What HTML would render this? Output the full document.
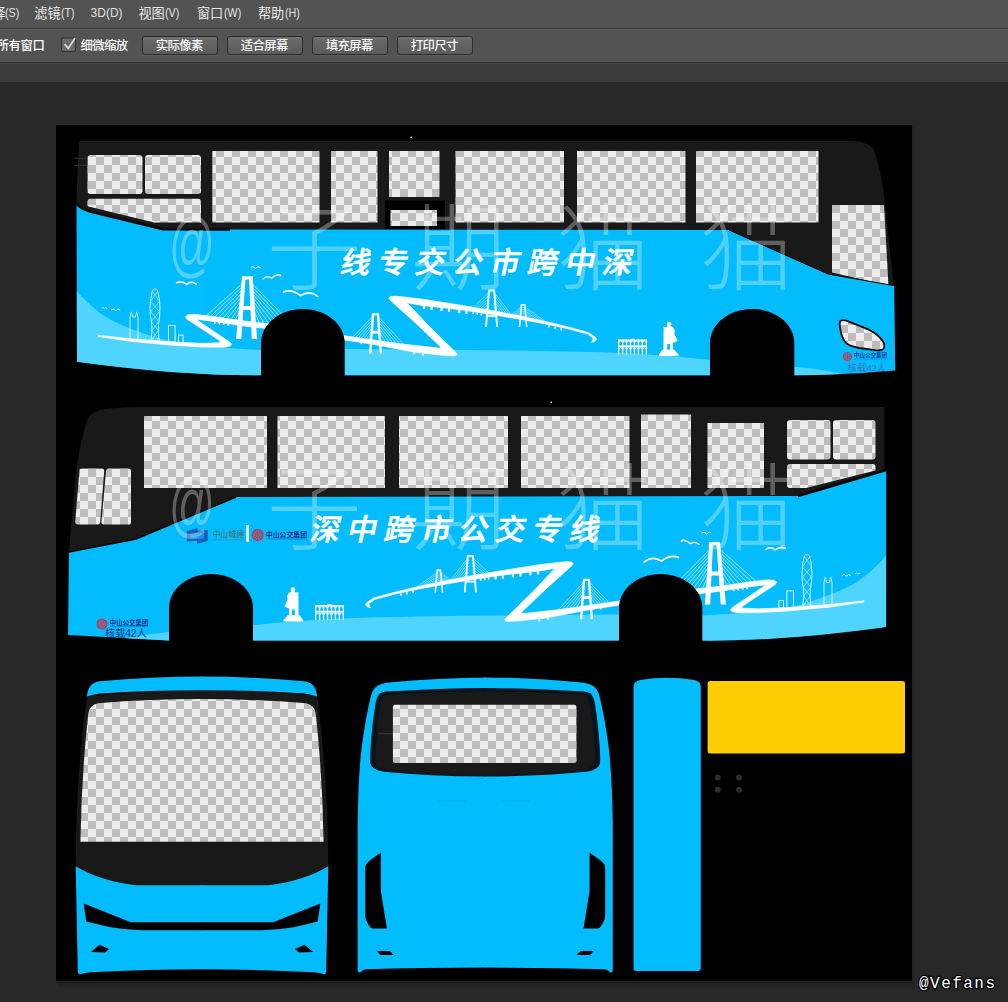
<!DOCTYPE html>
<html lang="zh"><head><meta charset="utf-8"><title>Photoshop - bus livery</title>
<style>
html,body{margin:0;padding:0;background:#282828;overflow:hidden}
body{width:1008px;height:1002px;position:relative;font-family:"Liberation Sans",sans-serif}
.mt{position:absolute;top:6.4px;color:#e2e2e2;font-size:12px;line-height:14px;white-space:nowrap;transform:scaleX(0.89);transform-origin:0 0}
svg text{font-family:"Liberation Sans","Noto Sans CJK SC",sans-serif}
</style></head><body>
<svg role="img" aria-label="Photoshop canvas: bus livery texture" width="1008" height="1002" viewBox="0 0 1008 1002" style="position:absolute;left:0;top:0"><defs>
<pattern id="ck" x="56" y="125" width="16" height="16" patternUnits="userSpaceOnUse"><rect width="16" height="16" fill="#ececec"/><rect x="8" width="8" height="8" fill="#bdbdbd"/><rect y="8" width="8" height="8" fill="#bdbdbd"/></pattern>
<linearGradient id="btn" x1="0" y1="0" x2="0" y2="1"><stop offset="0" stop-color="#6b6b6b"/><stop offset="1" stop-color="#5a5a5a"/></linearGradient>
<clipPath id="b2clip"><path d="M69,552 L136,539 L236,497 L798,496 L886,470 L886,627 Q782,641.3 702,640.5 L169,640.5 L68,635 Z"/></clipPath>
<clipPath id="docclip"><rect x="56" y="125" width="856" height="856"/></clipPath>
</defs>
<rect width="1008" height="1002" fill="#282828"/>
<rect width="1008" height="28" fill="#535353"/>
<rect y="28" width="1008" height="1" fill="#383838"/>
<rect y="29" width="1008" height="33" fill="#535353"/>
<rect y="29" width="1008" height="1" fill="#5e5e5e"/>
<rect y="62" width="1008" height="1" fill="#2e2e2e"/>
<rect y="63" width="1008" height="19" fill="#3b3b3b"/>
<rect y="63" width="1008" height="1" fill="#474747"/>
<defs><linearGradient id="shb" x1="0" y1="0" x2="0" y2="1"><stop offset="0" stop-color="#1d1d1d"/><stop offset="1" stop-color="#282828"/></linearGradient><linearGradient id="shr" x1="0" y1="0" x2="1" y2="0"><stop offset="0" stop-color="#212121"/><stop offset="1" stop-color="#282828"/></linearGradient></defs>
<rect x="57" y="981" width="857" height="8" fill="url(#shb)"/><rect x="912" y="127" width="4" height="856" fill="url(#shr)"/>
<rect x="56" y="125" width="856" height="856" fill="#000"/>
<path d="M79,141 L853,141 Q868,141.5 873.5,149 Q880,165 884,196 L894,287 L828,276 L729,232 L163,231 L76,207 Z" fill="#191919"/>
<rect x="87.5" y="155.0" width="55.0" height="39.0" rx="3.0" fill="url(#ck)"/>
<rect x="145.0" y="155.0" width="56.0" height="39.0" rx="3.0" fill="url(#ck)"/>
<path d="M90.5,198.8 L198,198.8 Q201,198.8 201,201.8 L201,222.6 L154,222.6 L87.5,206.2 L87.5,201.8 Q87.5,198.8 90.5,198.8Z" fill="url(#ck)"/>
<rect x="212.3" y="151.0" width="107.2" height="71.6" rx="0.5" fill="url(#ck)"/>
<rect x="331.0" y="151.0" width="46.5" height="71.6" rx="0.5" fill="url(#ck)"/>
<rect x="389.0" y="151.0" width="50.5" height="46.0" rx="0.5" fill="url(#ck)"/>
<rect x="385" y="200.5" width="60" height="29" fill="#000"/>
<rect x="390.5" y="210.0" width="46.5" height="16.0" rx="0.0" fill="url(#ck)"/>
<rect x="455.5" y="151.0" width="108.5" height="71.6" rx="0.5" fill="url(#ck)"/>
<rect x="577.0" y="151.0" width="108.5" height="71.6" rx="0.5" fill="url(#ck)"/>
<rect x="696.0" y="151.0" width="122.5" height="71.6" rx="0.5" fill="url(#ck)"/>
<path d="M832,205 L884,205 L888.5,285.5 L832,272.6 Z" fill="url(#ck)"/>
<path d="M76.5,203.6 Q80,208.5 90,211.6 L163,229.4 L729,230 L828,274 L894.2,285.8 L895.2,370.4 Q840,375 793,375.3 L260,375.3 Q180,375.8 77,361.8 Z" fill="#02bcfd" stroke="#000" stroke-width="0"/>
<path d="M76.5,203.6 Q80,208.5 90,211.6 L163,229.4 L230,229.6" fill="none" stroke="#050505" stroke-width="2.4"/>
<path d="M74,158.2 H87.5 M74,165.4 H87.5" stroke="#444" stroke-width="0.7"/>
<path d="M729,230 L828,274 L893,285.5" fill="none" stroke="#050505" stroke-width="1"/>
<clipPath id="b1clip"><path d="M76.5,203.6 Q80,208.5 90,211.6 L163,229.4 L729,230 L828,274 L894.2,285.8 L895.2,370.4 Q840,375 793,375.3 L260,375.3 Q180,375.8 77,361.8 Z"/></clipPath>
<g clip-path="url(#b1clip)"><g transform="translate(962,-265.5) scale(-1,1)"><path d="M100,662 L124,638 Q146,634.3 169,632 Q215,629 253,625.3 Q300,620 360,617.8 Q440,616 500,615.6 Q580,614.4 620,614.5 Q670,615.8 702,615.4 Q740,613.5 773,610 Q800,606 815,600 Q840,592 857,582 Q874,570 887,554.5 L890,650 Z" fill="#4fd4ff"/><g><g fill="#fff"><path d="M283.2,621.4 Q283,619.6 285,618.4 L287.6,615.2 L299.6,615.2 L301.8,618.4 Q303.6,619.6 303.3,621.4Z"/><circle cx="292.9" cy="589.6" r="2.3"/><path d="M291.6,591.2 L294.6,591.2 L295.2,592.4 L298.4,592.2 L298.6,615.4 L294.8,615.4 L294.8,609.4 L292,609.4 L292,615.4 L289,615.4 L289.2,608.4 L284.4,606.6 L287.6,599.6 L287.2,596 Q287.8,593 291.6,591.2Z"/></g><g fill="#fff"><rect x="315" y="605" width="29" height="1.3"/><rect x="315" y="610.9" width="29" height="1.5"/><rect x="327.5" y="604.2" width="4" height="1.2"/><rect x="315.00" y="605" width="1.3" height="14.9"/><rect x="318.96" y="605" width="1.3" height="14.9"/><rect x="322.91" y="605" width="1.3" height="14.9"/><rect x="326.87" y="605" width="1.3" height="14.9"/><rect x="330.83" y="605" width="1.3" height="14.9"/><rect x="334.79" y="605" width="1.3" height="14.9"/><rect x="338.74" y="605" width="1.3" height="14.9"/><rect x="342.70" y="605" width="1.3" height="14.9"/></g><g fill="none" stroke="#fff" stroke-width="0.8"><path d="M315.65,608.6 a1.98,2 0 0 1 3.96,0 M315.65,615.4 a1.98,2.2 0 0 1 3.96,0"/><path d="M319.61,608.6 a1.98,2 0 0 1 3.96,0 M319.61,615.4 a1.98,2.2 0 0 1 3.96,0"/><path d="M323.56,608.6 a1.98,2 0 0 1 3.96,0 M323.56,615.4 a1.98,2.2 0 0 1 3.96,0"/><path d="M327.52,608.6 a1.98,2 0 0 1 3.96,0 M327.52,615.4 a1.98,2.2 0 0 1 3.96,0"/><path d="M331.48,608.6 a1.98,2 0 0 1 3.96,0 M331.48,615.4 a1.98,2.2 0 0 1 3.96,0"/><path d="M335.44,608.6 a1.98,2 0 0 1 3.96,0 M335.44,615.4 a1.98,2.2 0 0 1 3.96,0"/><path d="M339.39,608.6 a1.98,2 0 0 1 3.96,0 M339.39,615.4 a1.98,2.2 0 0 1 3.96,0"/></g><path d="M366.3,603.0 L373.5,598.0 L394.7,592.2 L412.8,587.8 L436.4,582.6 L465.6,576.8 L499.0,571.0 L540.0,564.6 L566.0,561.6 L571.5,561.9 L573.3,563.6 L571.5,566.0 L546.0,589.0 L521.0,612.8 L523.0,613.6 L559.4,609.6 L590.0,605.2 L622.0,600.6 L622.0,604.8 L590.0,609.7 L545.5,618.0 L520.0,620.8 L507.0,621.6 L504.6,620.0 L506.5,617.5 L534.0,590.5 L553.0,570.3 L556.0,568.3 L540.0,570.9 L499.0,575.6 L465.6,580.8 L436.4,585.8 L412.8,590.2 L394.7,594.2 L374.5,599.6 L369.0,603.5 L369.5,606.5 L370.8,607.6 L368.0,607.3 L365.4,605.0Z" fill="#fff" stroke="#fff" stroke-width="0.6" stroke-linejoin="round"/><g fill="#fff"><rect x="494.5" y="575.8" width="2.2" height="3.6"/><rect x="501.7" y="575.0" width="2.2" height="3.6"/><rect x="511.9" y="573.7" width="2.2" height="3.6"/><rect x="519.4" y="572.9" width="2.2" height="3.6"/><rect x="529.2" y="571.7" width="2.2" height="3.6"/><rect x="536.9" y="570.8" width="2.2" height="3.6"/><rect x="538.5" y="618.9" width="1.6" height="2.6"/><rect x="547.0" y="617.2" width="1.6" height="2.6"/><rect x="600.0" y="607" width="1.4" height="2.6"/><rect x="400.0" y="593.4" width="1.5" height="2.6"/><rect x="406.0" y="592.0" width="1.5" height="2.6"/><rect x="412.5" y="590.5" width="1.5" height="2.6"/><rect x="480.0" y="578.6" width="1.4" height="2.4"/><rect x="484.0" y="577.9" width="1.4" height="2.4"/><rect x="488.0" y="577.2" width="1.4" height="2.4"/></g><g stroke="#fff" stroke-width="0.50" opacity="0.85" fill="none"><path d="M438.9,571.0 L413.5,589.3"/><path d="M438.9,572.8 L417.1,588.6"/><path d="M438.9,574.7 L420.7,587.9"/><path d="M438.9,576.5 L424.2,587.2"/><path d="M438.9,578.3 L427.8,586.6"/><path d="M438.9,580.2 L431.4,585.9"/><path d="M438.9,582.0 L435.0,585.2"/></g><g stroke="#fff" stroke-width="0.50" opacity="0.80" fill="none"><path d="M438.9,571.0 L451.0,580.4"/><path d="M438.9,572.8 L449.7,580.8"/><path d="M438.9,574.7 L448.3,581.1"/><path d="M438.9,576.5 L447.0,581.5"/><path d="M438.9,578.3 L445.7,581.9"/><path d="M438.9,580.2 L444.3,582.2"/><path d="M438.9,582.0 L443.0,582.6"/></g><g stroke="#fff" stroke-width="0.50" opacity="0.85" fill="none"><path d="M468.6,557.0 L450.0,581.0"/><path d="M468.6,560.0 L452.5,580.6"/><path d="M468.6,563.0 L455.0,580.1"/><path d="M468.6,566.0 L457.5,579.7"/><path d="M468.6,569.0 L460.0,579.3"/><path d="M468.6,572.0 L462.5,578.8"/><path d="M468.6,575.0 L465.0,578.4"/></g><g stroke="#fff" stroke-width="0.50" opacity="0.85" fill="none"><path d="M472.2,557.0 L489.0,573.2"/><path d="M472.2,560.0 L486.8,573.7"/><path d="M472.2,563.0 L484.7,574.1"/><path d="M472.2,566.0 L482.5,574.6"/><path d="M472.2,569.0 L480.3,575.1"/><path d="M472.2,572.0 L478.2,575.5"/><path d="M472.2,575.0 L476.0,576.0"/></g><path d="M437.3,569.5 L435.3,592.5 M440.5,569.5 L442.5,592.5" stroke="#fff" stroke-width="1.5" fill="none"/><path d="M437.2,570.2 L440.6,570.2" stroke="#fff" stroke-width="1.5"/><path d="M467.9,555.2 L464.8,592.3 M472.9,555.2 L476.0,592.3" stroke="#fff" stroke-width="1.9" fill="none"/><path d="M467.8,556.0 L473.0,556.0" stroke="#fff" stroke-width="1.9"/><path d="M465.7,581.6 L475.1,581.6" stroke="#fff" stroke-width="1.9"/><g stroke="#fff" stroke-width="0.55" opacity="0.90" fill="none"><path d="M584.6,581.0 L558.0,610.3"/><path d="M584.6,583.7 L561.7,609.8"/><path d="M584.6,586.3 L565.3,609.3"/><path d="M584.6,589.0 L569.0,608.8"/><path d="M584.6,591.7 L572.7,608.2"/><path d="M584.6,594.3 L576.3,607.7"/><path d="M584.6,597.0 L580.0,607.2"/></g><g stroke="#fff" stroke-width="0.55" opacity="0.90" fill="none"><path d="M588.4,581.0 L609.0,602.4"/><path d="M588.4,583.7 L606.3,602.8"/><path d="M588.4,586.3 L603.7,603.3"/><path d="M588.4,589.0 L601.0,603.7"/><path d="M588.4,591.7 L598.3,604.1"/><path d="M588.4,594.3 L595.7,604.6"/><path d="M588.4,597.0 L593.0,605.0"/></g><path d="M584.1,578.8 L581.1,619.2 M588.9,578.8 L591.9,619.2" stroke="#fff" stroke-width="2.3" fill="none"/><path d="M584.0,579.8 L589.0,579.8" stroke="#fff" stroke-width="2.3"/><path d="M582.7,597.6 L590.3,597.6" stroke="#fff" stroke-width="2.3"/><rect x="583.6" y="596.2" width="5.8" height="2.8" fill="#fff"/><path d="M690.0,589.6 L711.0,587.3 L731.7,584.6 L752.5,581.4 L767.8,579.8 L774.0,580.3 L776.6,582.0 L775.2,584.6 L757.0,596.5 L742.5,606.2 L741.5,607.6 L744.0,608.2 L759.4,608.8 L787.0,607.6 L829.0,604.4 L864.0,600.8 L864.0,602.0 L829.0,607.2 L787.0,611.0 L759.4,612.6 L738.0,612.8 L731.6,611.6 L730.4,609.6 L733.0,607.0 L748.0,597.0 L766.0,584.8 L752.5,586.4 L731.7,589.6 L711.0,592.4 L690.0,594.6Z" fill="#fff" stroke="#fff" stroke-width="0.6" stroke-linejoin="round"/><g fill="#fff"><rect x="733.0" y="589.0" width="1.4" height="2.2"/><rect x="737.5" y="588.3" width="1.4" height="2.2"/><rect x="742.0" y="587.6" width="1.4" height="2.2"/><rect x="746.5" y="587.0" width="1.4" height="2.2"/></g><g stroke="#fff" stroke-width="0.65" opacity="0.90" fill="none"><path d="M711.2,548.0 L660.0,600.0"/><path d="M711.2,551.0 L665.8,599.1"/><path d="M711.2,554.0 L671.5,598.2"/><path d="M711.2,557.0 L677.2,597.3"/><path d="M711.2,560.0 L683.0,596.4"/><path d="M711.2,563.0 L688.8,595.5"/><path d="M711.2,566.0 L694.5,594.6"/><path d="M711.2,569.0 L700.2,593.7"/><path d="M711.2,572.0 L706.0,592.8"/></g><g stroke="#fff" stroke-width="0.65" opacity="0.90" fill="none"><path d="M718.4,548.0 L755.5,580.8"/><path d="M718.4,551.0 L751.6,581.8"/><path d="M718.4,554.0 L747.6,582.7"/><path d="M718.4,557.0 L743.7,583.6"/><path d="M718.4,560.0 L739.8,584.6"/><path d="M718.4,563.0 L735.8,585.5"/><path d="M718.4,566.0 L731.9,586.5"/><path d="M718.4,569.0 L727.9,587.4"/><path d="M718.4,572.0 L724.0,588.4"/></g><g fill="#fff"><path d="M709.3,542 L720,542 L720,545 L709.3,545Z"/><path d="M709.3,542 L713,542 L710.2,604.4 L704.9,604.4Z"/><path d="M716.4,542 L720,542 L725.9,604.4 L720.7,604.4Z"/><path d="M710.5,571.6 L719.5,571.6 L719.8,575.4 L710.2,575.4Z"/></g><g fill="none" stroke="#fff" stroke-width="0.9"><rect x="778.9" y="600.6" width="4.6" height="7.6"/><rect x="786.9" y="590.9" width="6.6" height="16.8"/><path d="M824,604.8 L824,582.5 L825.3,577.4 L826.6,582.5 L829.4,582.5 L830.7,577.4 L832,582.5 L832,604" opacity="0.85"/><path d="M804.4,556 Q800,572 803.6,590 Q804,598 802.7,606.6 M809.6,556 Q814,572 810.2,590 Q809.8,598 811,606.6 M804.4,556 Q807,552.6 809.6,556" stroke-width="0.8"/><path d="M804.6,557 L811.6,567 L802.6,577 L810.8,587 L803.6,596 L810.8,606 M809.4,557 L802.4,567 L811.4,577 L803.2,587 L810.2,596 L803,606" stroke-width="0.55" opacity="0.9"/></g><ellipse cx="807" cy="555.2" rx="2.4" ry="1.2" fill="#8aa" opacity="0.8"/><path d="M644.3,561.9 Q652.6,555.1 661.4,561.1 Q670.2,554.1 678.5,557.5" fill="none" stroke="#fff" stroke-width="1.7" stroke-linecap="round" stroke-linejoin="round"/><path d="M681.2,541.3 Q683.8,538.3 690.4,543.7 Q694.7,540.8 699.1,544.4" fill="none" stroke="#fff" stroke-width="1.3" stroke-linecap="round" stroke-linejoin="round"/><path d="M701.9,532.9 Q703.8,531.0 706.6,533.9 Q709.2,531.2 711.0,532.5" fill="none" stroke="#fff" stroke-width="1.0" stroke-linecap="round" stroke-linejoin="round"/><path d="M765.7,549.6 Q770.5,545.8 775.4,550.0 Q780.1,545.9 785.5,548.2" fill="none" stroke="#fff" stroke-width="1.5" stroke-linecap="round" stroke-linejoin="round"/><path d="M842.0,575.5 Q843.9,573.0 846.2,576.0 Q848.6,573.6 850.5,575.2" fill="none" stroke="#fff" stroke-width="0.9" stroke-linecap="round" stroke-linejoin="round"/><path d="M855.3,573.6 Q856.5,572.2 857.7,574.0 Q859.0,572.4 860.2,573.3" fill="none" stroke="#fff" stroke-width="0.7" stroke-linecap="round" stroke-linejoin="round"/></g></g></g>
<path d="M261.0,380.0 L261.0,343.0 C261.0,324.2 279.7,309.0 302.9,309.0 C326.0,309.0 344.7,324.2 344.7,343.0 L344.7,380.0 Z" fill="#000"/>
<path d="M710.0,380.0 L710.0,343.0 C710.0,324.2 728.9,309.0 752.1,309.0 C775.4,309.0 794.3,324.2 794.3,343.0 L794.3,380.0 Z" fill="#000"/>
<text transform="translate(339.20,273.40) skewX(-12)" x="0 37.45 74.9 112.35 149.8 187.25 224.7 262.15" y="0" font-size="29.5" font-weight="500" fill="#fff" stroke="#fff" stroke-width="0.65">线专交公市跨中深</text>
<path d="M840.6,320.8 Q843,319.6 847,320.9 L864.6,327.9 Q873,331.5 877.5,335.2 Q882.5,339.5 884,343.5 Q885,348.3 882.5,349.6 Q879,350.8 875,350.2 L859.3,348 Q851,346.5 846.8,343.8 Q843,340 841.9,335.7 Q840,329 839.7,325 Q839.5,321.5 840.6,320.8Z" fill="url(#ck)" stroke="#0a0a0a" stroke-width="1.8"/>
<g fill="none" stroke="#c9344c" stroke-width="0.94"><circle cx="847.50" cy="356.70" r="4.23"/><path d="M847.50,352.47 L847.50,360.93 M843.27,356.70 L851.73,356.70"/><circle cx="845.38" cy="354.73" r="0.94"/><circle cx="845.38" cy="358.67" r="0.94"/><circle cx="849.62" cy="354.73" r="0.94"/><circle cx="849.62" cy="358.67" r="0.94"/></g>
<text x="854.1 859.62 865.13 870.65 876.17 881.68" y="357.18" font-size="5.4" font-weight="700" fill="#1a3a98">中山公交集团</text>
<rect x="854.3" y="358.6" width="32.5" height="0.8" fill="#1a3a98" opacity="0.35"/>
<text x="847.5 856.94 866.38 871.62 876.86" y="370.58" font-size="9.6" fill="#3f74b9">核载42人</text>
<path d="M150,407 L884.5,407 L884.5,476 L798,498 L236,499 L136,541 L68.5,554 L76.3,472 Q80,442 87,421 Q89.5,413 100,410 Q112,407.3 150,407Z" fill="#191919"/>
<path d="M79.6,469 Q80,468.6 82,468.6 L102,468.6 Q104.4,468.8 104.2,471 L100.2,522 Q100,524.6 97.5,524.6 L77.5,524.6 Q75,524.4 75.2,522 Z" fill="url(#ck)"/>
<path d="M106,471 Q106.2,468.7 108.5,468.6 L128.5,468.6 Q131,468.8 131,471 L131,522 Q131,524.6 128.5,524.6 L103.5,524.6 Q101.2,524.4 101.4,522 Z" fill="url(#ck)"/>
<rect x="144.0" y="416.0" width="123.0" height="72.0" rx="0.5" fill="url(#ck)"/>
<rect x="277.5" y="416.0" width="107.5" height="72.0" rx="0.5" fill="url(#ck)"/>
<rect x="399.0" y="416.0" width="109.0" height="72.0" rx="0.5" fill="url(#ck)"/>
<rect x="521.0" y="416.0" width="108.5" height="72.0" rx="0.5" fill="url(#ck)"/>
<rect x="641.0" y="414.5" width="50.0" height="73.5" rx="0.5" fill="url(#ck)"/>
<rect x="707.5" y="423.0" width="56.5" height="65.0" rx="0.5" fill="url(#ck)"/>
<rect x="787.0" y="420.0" width="43.5" height="39.5" rx="3.0" fill="url(#ck)"/>
<rect x="833.0" y="420.0" width="42.5" height="39.5" rx="3.0" fill="url(#ck)"/>
<path d="M790,464 L872.5,464 Q875.5,464 875.5,467 L875.5,470.5 L806,488 L790,488 Q787,488 787,485 L787,467 Q787,464 790,464Z" fill="url(#ck)"/>
<path d="M69,552 L136,539 L236,497 L798,496 L886.2,470 L886.2,627 Q782,641.3 702,640.6 L169,640.6 L68,635 Z" fill="#02bcfd"/>
<path d="M69,552 L136,539 L236,497" fill="none" stroke="#050505" stroke-width="1.6"/>
<path d="M798,496 L886.2,470" fill="none" stroke="#050505" stroke-width="2.4"/>
<g clip-path="url(#b2clip)"><path d="M100,662 L124,638 Q146,634.3 169,632 Q215,629 253,625.3 Q300,620 360,617.8 Q440,616 500,615.6 Q580,614.4 620,614.5 Q670,615.8 702,615.4 Q740,613.5 773,610 Q800,606 815,600 Q840,592 857,582 Q874,570 887,554.5 L890,650 Z" fill="#4fd4ff"/><g><g fill="#fff"><path d="M283.2,621.4 Q283,619.6 285,618.4 L287.6,615.2 L299.6,615.2 L301.8,618.4 Q303.6,619.6 303.3,621.4Z"/><circle cx="292.9" cy="589.6" r="2.3"/><path d="M291.6,591.2 L294.6,591.2 L295.2,592.4 L298.4,592.2 L298.6,615.4 L294.8,615.4 L294.8,609.4 L292,609.4 L292,615.4 L289,615.4 L289.2,608.4 L284.4,606.6 L287.6,599.6 L287.2,596 Q287.8,593 291.6,591.2Z"/></g><g fill="#fff"><rect x="315" y="605" width="29" height="1.3"/><rect x="315" y="610.9" width="29" height="1.5"/><rect x="327.5" y="604.2" width="4" height="1.2"/><rect x="315.00" y="605" width="1.3" height="14.9"/><rect x="318.96" y="605" width="1.3" height="14.9"/><rect x="322.91" y="605" width="1.3" height="14.9"/><rect x="326.87" y="605" width="1.3" height="14.9"/><rect x="330.83" y="605" width="1.3" height="14.9"/><rect x="334.79" y="605" width="1.3" height="14.9"/><rect x="338.74" y="605" width="1.3" height="14.9"/><rect x="342.70" y="605" width="1.3" height="14.9"/></g><g fill="none" stroke="#fff" stroke-width="0.8"><path d="M315.65,608.6 a1.98,2 0 0 1 3.96,0 M315.65,615.4 a1.98,2.2 0 0 1 3.96,0"/><path d="M319.61,608.6 a1.98,2 0 0 1 3.96,0 M319.61,615.4 a1.98,2.2 0 0 1 3.96,0"/><path d="M323.56,608.6 a1.98,2 0 0 1 3.96,0 M323.56,615.4 a1.98,2.2 0 0 1 3.96,0"/><path d="M327.52,608.6 a1.98,2 0 0 1 3.96,0 M327.52,615.4 a1.98,2.2 0 0 1 3.96,0"/><path d="M331.48,608.6 a1.98,2 0 0 1 3.96,0 M331.48,615.4 a1.98,2.2 0 0 1 3.96,0"/><path d="M335.44,608.6 a1.98,2 0 0 1 3.96,0 M335.44,615.4 a1.98,2.2 0 0 1 3.96,0"/><path d="M339.39,608.6 a1.98,2 0 0 1 3.96,0 M339.39,615.4 a1.98,2.2 0 0 1 3.96,0"/></g><path d="M366.3,603.0 L373.5,598.0 L394.7,592.2 L412.8,587.8 L436.4,582.6 L465.6,576.8 L499.0,571.0 L540.0,564.6 L566.0,561.6 L571.5,561.9 L573.3,563.6 L571.5,566.0 L546.0,589.0 L521.0,612.8 L523.0,613.6 L559.4,609.6 L590.0,605.2 L622.0,600.6 L622.0,604.8 L590.0,609.7 L545.5,618.0 L520.0,620.8 L507.0,621.6 L504.6,620.0 L506.5,617.5 L534.0,590.5 L553.0,570.3 L556.0,568.3 L540.0,570.9 L499.0,575.6 L465.6,580.8 L436.4,585.8 L412.8,590.2 L394.7,594.2 L374.5,599.6 L369.0,603.5 L369.5,606.5 L370.8,607.6 L368.0,607.3 L365.4,605.0Z" fill="#fff" stroke="#fff" stroke-width="0.6" stroke-linejoin="round"/><g fill="#fff"><rect x="494.5" y="575.8" width="2.2" height="3.6"/><rect x="501.7" y="575.0" width="2.2" height="3.6"/><rect x="511.9" y="573.7" width="2.2" height="3.6"/><rect x="519.4" y="572.9" width="2.2" height="3.6"/><rect x="529.2" y="571.7" width="2.2" height="3.6"/><rect x="536.9" y="570.8" width="2.2" height="3.6"/><rect x="538.5" y="618.9" width="1.6" height="2.6"/><rect x="547.0" y="617.2" width="1.6" height="2.6"/><rect x="600.0" y="607" width="1.4" height="2.6"/><rect x="400.0" y="593.4" width="1.5" height="2.6"/><rect x="406.0" y="592.0" width="1.5" height="2.6"/><rect x="412.5" y="590.5" width="1.5" height="2.6"/><rect x="480.0" y="578.6" width="1.4" height="2.4"/><rect x="484.0" y="577.9" width="1.4" height="2.4"/><rect x="488.0" y="577.2" width="1.4" height="2.4"/></g><g stroke="#fff" stroke-width="0.50" opacity="0.85" fill="none"><path d="M438.9,571.0 L413.5,589.3"/><path d="M438.9,572.8 L417.1,588.6"/><path d="M438.9,574.7 L420.7,587.9"/><path d="M438.9,576.5 L424.2,587.2"/><path d="M438.9,578.3 L427.8,586.6"/><path d="M438.9,580.2 L431.4,585.9"/><path d="M438.9,582.0 L435.0,585.2"/></g><g stroke="#fff" stroke-width="0.50" opacity="0.80" fill="none"><path d="M438.9,571.0 L451.0,580.4"/><path d="M438.9,572.8 L449.7,580.8"/><path d="M438.9,574.7 L448.3,581.1"/><path d="M438.9,576.5 L447.0,581.5"/><path d="M438.9,578.3 L445.7,581.9"/><path d="M438.9,580.2 L444.3,582.2"/><path d="M438.9,582.0 L443.0,582.6"/></g><g stroke="#fff" stroke-width="0.50" opacity="0.85" fill="none"><path d="M468.6,557.0 L450.0,581.0"/><path d="M468.6,560.0 L452.5,580.6"/><path d="M468.6,563.0 L455.0,580.1"/><path d="M468.6,566.0 L457.5,579.7"/><path d="M468.6,569.0 L460.0,579.3"/><path d="M468.6,572.0 L462.5,578.8"/><path d="M468.6,575.0 L465.0,578.4"/></g><g stroke="#fff" stroke-width="0.50" opacity="0.85" fill="none"><path d="M472.2,557.0 L489.0,573.2"/><path d="M472.2,560.0 L486.8,573.7"/><path d="M472.2,563.0 L484.7,574.1"/><path d="M472.2,566.0 L482.5,574.6"/><path d="M472.2,569.0 L480.3,575.1"/><path d="M472.2,572.0 L478.2,575.5"/><path d="M472.2,575.0 L476.0,576.0"/></g><path d="M437.3,569.5 L435.3,592.5 M440.5,569.5 L442.5,592.5" stroke="#fff" stroke-width="1.5" fill="none"/><path d="M437.2,570.2 L440.6,570.2" stroke="#fff" stroke-width="1.5"/><path d="M467.9,555.2 L464.8,592.3 M472.9,555.2 L476.0,592.3" stroke="#fff" stroke-width="1.9" fill="none"/><path d="M467.8,556.0 L473.0,556.0" stroke="#fff" stroke-width="1.9"/><path d="M465.7,581.6 L475.1,581.6" stroke="#fff" stroke-width="1.9"/><g stroke="#fff" stroke-width="0.55" opacity="0.90" fill="none"><path d="M584.6,581.0 L558.0,610.3"/><path d="M584.6,583.7 L561.7,609.8"/><path d="M584.6,586.3 L565.3,609.3"/><path d="M584.6,589.0 L569.0,608.8"/><path d="M584.6,591.7 L572.7,608.2"/><path d="M584.6,594.3 L576.3,607.7"/><path d="M584.6,597.0 L580.0,607.2"/></g><g stroke="#fff" stroke-width="0.55" opacity="0.90" fill="none"><path d="M588.4,581.0 L609.0,602.4"/><path d="M588.4,583.7 L606.3,602.8"/><path d="M588.4,586.3 L603.7,603.3"/><path d="M588.4,589.0 L601.0,603.7"/><path d="M588.4,591.7 L598.3,604.1"/><path d="M588.4,594.3 L595.7,604.6"/><path d="M588.4,597.0 L593.0,605.0"/></g><path d="M584.1,578.8 L581.1,619.2 M588.9,578.8 L591.9,619.2" stroke="#fff" stroke-width="2.3" fill="none"/><path d="M584.0,579.8 L589.0,579.8" stroke="#fff" stroke-width="2.3"/><path d="M582.7,597.6 L590.3,597.6" stroke="#fff" stroke-width="2.3"/><rect x="583.6" y="596.2" width="5.8" height="2.8" fill="#fff"/><path d="M690.0,589.6 L711.0,587.3 L731.7,584.6 L752.5,581.4 L767.8,579.8 L774.0,580.3 L776.6,582.0 L775.2,584.6 L757.0,596.5 L742.5,606.2 L741.5,607.6 L744.0,608.2 L759.4,608.8 L787.0,607.6 L829.0,604.4 L864.0,600.8 L864.0,602.0 L829.0,607.2 L787.0,611.0 L759.4,612.6 L738.0,612.8 L731.6,611.6 L730.4,609.6 L733.0,607.0 L748.0,597.0 L766.0,584.8 L752.5,586.4 L731.7,589.6 L711.0,592.4 L690.0,594.6Z" fill="#fff" stroke="#fff" stroke-width="0.6" stroke-linejoin="round"/><g fill="#fff"><rect x="733.0" y="589.0" width="1.4" height="2.2"/><rect x="737.5" y="588.3" width="1.4" height="2.2"/><rect x="742.0" y="587.6" width="1.4" height="2.2"/><rect x="746.5" y="587.0" width="1.4" height="2.2"/></g><g stroke="#fff" stroke-width="0.65" opacity="0.90" fill="none"><path d="M711.2,548.0 L660.0,600.0"/><path d="M711.2,551.0 L665.8,599.1"/><path d="M711.2,554.0 L671.5,598.2"/><path d="M711.2,557.0 L677.2,597.3"/><path d="M711.2,560.0 L683.0,596.4"/><path d="M711.2,563.0 L688.8,595.5"/><path d="M711.2,566.0 L694.5,594.6"/><path d="M711.2,569.0 L700.2,593.7"/><path d="M711.2,572.0 L706.0,592.8"/></g><g stroke="#fff" stroke-width="0.65" opacity="0.90" fill="none"><path d="M718.4,548.0 L755.5,580.8"/><path d="M718.4,551.0 L751.6,581.8"/><path d="M718.4,554.0 L747.6,582.7"/><path d="M718.4,557.0 L743.7,583.6"/><path d="M718.4,560.0 L739.8,584.6"/><path d="M718.4,563.0 L735.8,585.5"/><path d="M718.4,566.0 L731.9,586.5"/><path d="M718.4,569.0 L727.9,587.4"/><path d="M718.4,572.0 L724.0,588.4"/></g><g fill="#fff"><path d="M709.3,542 L720,542 L720,545 L709.3,545Z"/><path d="M709.3,542 L713,542 L710.2,604.4 L704.9,604.4Z"/><path d="M716.4,542 L720,542 L725.9,604.4 L720.7,604.4Z"/><path d="M710.5,571.6 L719.5,571.6 L719.8,575.4 L710.2,575.4Z"/></g><g fill="none" stroke="#fff" stroke-width="0.9"><rect x="778.9" y="600.6" width="4.6" height="7.6"/><rect x="786.9" y="590.9" width="6.6" height="16.8"/><path d="M824,604.8 L824,582.5 L825.3,577.4 L826.6,582.5 L829.4,582.5 L830.7,577.4 L832,582.5 L832,604" opacity="0.85"/><path d="M804.4,556 Q800,572 803.6,590 Q804,598 802.7,606.6 M809.6,556 Q814,572 810.2,590 Q809.8,598 811,606.6 M804.4,556 Q807,552.6 809.6,556" stroke-width="0.8"/><path d="M804.6,557 L811.6,567 L802.6,577 L810.8,587 L803.6,596 L810.8,606 M809.4,557 L802.4,567 L811.4,577 L803.2,587 L810.2,596 L803,606" stroke-width="0.55" opacity="0.9"/></g><ellipse cx="807" cy="555.2" rx="2.4" ry="1.2" fill="#8aa" opacity="0.8"/><path d="M644.3,561.9 Q652.6,555.1 661.4,561.1 Q670.2,554.1 678.5,557.5" fill="none" stroke="#fff" stroke-width="1.7" stroke-linecap="round" stroke-linejoin="round"/><path d="M681.2,541.3 Q683.8,538.3 690.4,543.7 Q694.7,540.8 699.1,544.4" fill="none" stroke="#fff" stroke-width="1.3" stroke-linecap="round" stroke-linejoin="round"/><path d="M701.9,532.9 Q703.8,531.0 706.6,533.9 Q709.2,531.2 711.0,532.5" fill="none" stroke="#fff" stroke-width="1.0" stroke-linecap="round" stroke-linejoin="round"/><path d="M765.7,549.6 Q770.5,545.8 775.4,550.0 Q780.1,545.9 785.5,548.2" fill="none" stroke="#fff" stroke-width="1.5" stroke-linecap="round" stroke-linejoin="round"/><path d="M842.0,575.5 Q843.9,573.0 846.2,576.0 Q848.6,573.6 850.5,575.2" fill="none" stroke="#fff" stroke-width="0.9" stroke-linecap="round" stroke-linejoin="round"/><path d="M855.3,573.6 Q856.5,572.2 857.7,574.0 Q859.0,572.4 860.2,573.3" fill="none" stroke="#fff" stroke-width="0.7" stroke-linecap="round" stroke-linejoin="round"/></g></g>
<path d="M169.0,646.0 L169.0,608.0 C169.0,589.2 187.8,574.0 211.0,574.0 C234.2,574.0 253.0,589.2 253.0,608.0 L253.0,646.0 Z" fill="#000"/>
<path d="M619.0,646.0 L619.0,608.0 C619.0,589.2 637.6,574.0 660.6,574.0 C683.7,574.0 702.3,589.2 702.3,608.0 L702.3,646.0 Z" fill="#000"/>
<text transform="translate(309.00,540.00) skewX(-12)" x="0 37.05 74.1 111.15 148.2 185.25 222.3 259.35" y="0" font-size="29.5" font-weight="500" fill="#fff" stroke="#fff" stroke-width="0.65">深中跨市公交专线</text>
<path fill-rule="evenodd" fill="#1d5fb6" d="M186.8,531 L197.6,528 L197.6,530.8 L207.8,530 L207.8,541 L197,543.7 L197,540.8 L186.8,541.6 Z M190.5,533.6 L204,532.8 L204,538.4 L190.5,539.2 Z"/>
<path fill="#1488e4" opacity="0.75" d="M190.5,533.6 L204,532.8 L204,538.4 L190.5,539.2 Z"/>
<text x="212.4 220.35 228.3 236.25" y="537.37" font-size="8" fill="#4f6b66">中山城建</text>
<rect x="212.8" y="539.3" width="31" height="0.9" fill="#4b6f78" opacity="0.3"/>
<rect x="246.3" y="525" width="2.6" height="16.8" fill="#fff"/>
<g fill="none" stroke="#c9344c" stroke-width="1.20"><circle cx="257.80" cy="535.00" r="5.40"/><path d="M257.80,529.60 L257.80,540.40 M252.40,535.00 L263.20,535.00"/><circle cx="255.10" cy="532.48" r="1.20"/><circle cx="255.10" cy="537.52" r="1.20"/><circle cx="260.50" cy="532.48" r="1.20"/><circle cx="260.50" cy="537.52" r="1.20"/></g>
<text x="265.8 272.67 279.53 286.4 293.27 300.13" y="536.76" font-size="6.9" font-weight="700" fill="#17328c">中山公交集团</text>
<rect x="266.2" y="538.3" width="40" height="1.1" fill="#17328c" opacity="0.35"/>
<g fill="none" stroke="#c9344c" stroke-width="1.12"><circle cx="102.00" cy="624.00" r="5.04"/><path d="M102.00,618.96 L102.00,629.04 M96.96,624.00 L107.04,624.00"/><circle cx="99.48" cy="621.65" r="1.12"/><circle cx="99.48" cy="626.35" r="1.12"/><circle cx="104.52" cy="621.65" r="1.12"/><circle cx="104.52" cy="626.35" r="1.12"/></g>
<text x="109.8 116.22 122.63 129.05 135.47 141.88" y="624.52" font-size="6.4" font-weight="700" fill="#17328c">中山公交集团</text>
<rect x="110" y="626" width="38" height="0.9" fill="#17328c" opacity="0.35"/>
<text x="105 115.1 125.19 130.8 136.4" y="636.86" font-size="10.3" fill="#1b3a7c">核载42人</text>
<g><path d="M202.6,690.2 Q150,690.2 86.9,696.3 Q76,775 75.7,867 L76,876 L136,887 L202.6,887Z" fill="#191919"/><g transform="translate(404.00,0) scale(-1,1)"><path d="M202.6,690.2 Q150,690.2 86.9,696.3 Q76,775 75.7,867 L76,876 L136,887 L202.6,887Z" fill="#191919"/></g></g>
<g><path d="M202.6,676.6 Q150,676.7 100,681.3 Q93,682 90,686.5 Q87.5,690 86.9,696.6 Q93,694.2 100,693.4 Q150,690.2 202.6,690.2Z" fill="#02bcfd"/><g transform="translate(404.00,0) scale(-1,1)"><path d="M202.6,676.6 Q150,676.7 100,681.3 Q93,682 90,686.5 Q87.5,690 86.9,696.6 Q93,694.2 100,693.4 Q150,690.2 202.6,690.2Z" fill="#02bcfd"/></g></g>
<path d="M202,699 Q150,699 98,703.2 Q94,704 91.3,706.7 Q89,708.5 88.3,713 Q81.5,775 80.4,841.8 L323.6,841.8 Q322.5,775 315.7,713 Q315,708.5 312.7,706.7 Q310,704 306,703.2 Q254,699 202,699Z" fill="url(#ck)"/>
<g><path d="M202.6,885.3 L136,885.3 Q100,881 75.7,866.3 L77.8,972 Q78.2,975 81,974 Q84,972.6 90,972.2 Q150,969.4 202.6,969.2Z" fill="#02bcfd"/><g transform="translate(404.00,0) scale(-1,1)"><path d="M202.6,885.3 L136,885.3 Q100,881 75.7,866.3 L77.8,972 Q78.2,975 81,974 Q84,972.6 90,972.2 Q150,969.4 202.6,969.2Z" fill="#02bcfd"/></g></g>
<g><path d="M202.6,922.3 L130.8,922.3 L83.7,903.6 L86.3,921.5 L109,927 Q126,930 142,930.2 L202.6,930.2Z" fill="#000"/><g transform="translate(404.00,0) scale(-1,1)"><path d="M202.6,922.3 L130.8,922.3 L83.7,903.6 L86.3,921.5 L109,927 Q126,930 142,930.2 L202.6,930.2Z" fill="#000"/></g></g>
<g><path d="M91,952 L99.5,944.7 L109,949 L105,952.5 Z" fill="#000"/><g transform="translate(404.00,0) scale(-1,1)"><path d="M91,952 L99.5,944.7 L109,949 L105,952.5 Z" fill="#000"/></g></g>
<g><path d="M485.8,677.4 Q440,677.6 386,682.7 Q381,683.5 378,685.6 Q373.5,688 371.3,694.8 Q366,715 362,745 Q358.5,770 357.6,824 L357.6,970.5 Q358,973.3 360.5,972.3 Q362,969.6 366,969.2 Q420,968 485.8,967.6 Z" fill="#02bcfd"/><g transform="translate(970.40,0) scale(-1,1)"><path d="M485.8,677.4 Q440,677.6 386,682.7 Q381,683.5 378,685.6 Q373.5,688 371.3,694.8 Q366,715 362,745 Q358.5,770 357.6,824 L357.6,970.5 Q358,973.3 360.5,972.3 Q362,969.6 366,969.2 Q420,968 485.8,967.6 Z" fill="#02bcfd"/></g></g>
<g><path d="M485.8,688 Q440,688.4 386,691.6 Q382.5,692 380,693.3 Q376.5,696.5 375.3,704.7 Q372.5,722 370.8,745 Q370,755 370.3,763 Q371,769.5 384,771.8 Q430,776.3 485.8,776.6 Z" fill="#06141b"/><g transform="translate(970.40,0) scale(-1,1)"><path d="M485.8,688 Q440,688.4 386,691.6 Q382.5,692 380,693.3 Q376.5,696.5 375.3,704.7 Q372.5,722 370.8,745 Q370,755 370.3,763 Q371,769.5 384,771.8 Q430,776.3 485.8,776.6 Z" fill="#06141b"/></g></g>
<g transform="translate(485.2,733.2) scale(0.956,0.945) translate(-485.2,-732.5)"><g><path d="M485.8,688 Q440,688.4 386,691.6 Q382.5,692 380,693.3 Q376.5,696.5 375.3,704.7 Q372.5,722 370.8,745 Q370,755 370.3,763 Q371,769.5 384,771.8 Q430,776.3 485.8,776.6 Z" fill="#191919"/><g transform="translate(970.40,0) scale(-1,1)"><path d="M485.8,688 Q440,688.4 386,691.6 Q382.5,692 380,693.3 Q376.5,696.5 375.3,704.7 Q372.5,722 370.8,745 Q370,755 370.3,763 Q371,769.5 384,771.8 Q430,776.3 485.8,776.6 Z" fill="#191919"/></g></g></g>
<rect x="392.9" y="704.7" width="183.6" height="58.2" rx="2.5" fill="url(#ck)"/>
<path d="M379,733.8 H393" stroke="#454545" stroke-width="0.8"/>
<g><path d="M380.8,852.7 Q368,861 366.3,864 Q365.2,866 365.2,869 L365.2,915 Q365.3,919 367,922 Q369.5,927.5 372.5,928.6 L386.9,928.6 L380.8,890.7 Z" fill="#000"/><g transform="translate(970.40,0) scale(-1,1)"><path d="M380.8,852.7 Q368,861 366.3,864 Q365.2,866 365.2,869 L365.2,915 Q365.3,919 367,922 Q369.5,927.5 372.5,928.6 L386.9,928.6 L380.8,890.7 Z" fill="#000"/></g></g>
<g><path d="M376.8,951.1 L389.8,951.1 L393.7,955 L380.4,955 Z" fill="#000"/><g transform="translate(970.40,0) scale(-1,1)"><path d="M376.8,951.1 L389.8,951.1 L393.7,955 L380.4,955 Z" fill="#000"/></g></g>
<path d="M438.7,801 H466.7 M502,801 H530" stroke="#0aa6e0" stroke-width="0.8"/>
<path d="M633.5,686 Q633.7,681.6 640,680 Q667,675.6 694.5,680 Q700.6,681.6 700.8,686 L700.8,969 Q700.5,971 698,971 L636,971 Q633.6,971 633.5,969Z" fill="#02bcfd"/>
<rect x="707.6" y="681" width="197.4" height="72.6" rx="2.5" fill="#ffcd04"/>
<circle cx="717.8" cy="777.4" r="3" fill="#2c2c2c"/>
<circle cx="739.0" cy="777.4" r="3" fill="#2c2c2c"/>
<circle cx="717.8" cy="789.7" r="3" fill="#2c2c2c"/>
<circle cx="739.0" cy="789.7" r="3" fill="#2c2c2c"/>
<rect x="410.5" y="136.5" width="1.5" height="1.5" fill="#ddd"/><rect x="550.5" y="401.5" width="1.5" height="1.5" fill="#ddd"/>
<g opacity="0.3" clip-path="url(#docclip)" fill="#fff" font-weight="300"><text transform="translate(169,267.5) scale(0.62,1)" font-size="73">@</text><text x="266.7 411 556.2 699.4" y="283" font-size="95">子期猫猫</text></g>
<g opacity="0.3" clip-path="url(#docclip)" fill="#fff" font-weight="300"><text transform="translate(169,527.8) scale(0.62,1)" font-size="73">@</text><text x="266.7 411 556.2 699.4" y="543.3" font-size="95">子期猫猫</text></g>
<text x="919" y="988" font-size="16" textLength="76" lengthAdjust="spacing" fill="#fff" stroke="#000" stroke-width="2.5" paint-order="stroke" style="font-family:'Liberation Mono',monospace">@Vefans</text>
<text x="-7.6" y="17.8" font-size="13.2" fill="#e8e8e8">择</text>
<text x="34.3 47.5" y="17.8" font-size="13.2" fill="#e8e8e8">滤镜</text>
<text x="138.4 151.6" y="17.8" font-size="13.2" fill="#e8e8e8">视图</text>
<text x="196.9 210.1" y="17.8" font-size="13.2" fill="#e8e8e8">窗口</text>
<text x="257.9 271.1" y="17.8" font-size="13.2" fill="#e8e8e8">帮助</text>
<text x="-3.6 8.4 20.4 32.4" y="49.9" font-size="12.4" font-weight="500" fill="#fbfbfb">所有窗口</text>
<text x="80.6 92.35 104.1 115.85" y="49.9" font-size="12.4" font-weight="500" fill="#fbfbfb">细微缩放</text>
<rect x="142.5" y="36.5" width="75" height="18" rx="2.5" fill="url(#btn)" stroke="#2d2d2d"/>
<rect x="143.5" y="37.5" width="73" height="1" fill="#808080" opacity="0.55"/>
<rect x="143.0" y="55" width="74" height="1" fill="#5e5e5e" opacity="0.8"/>
<text x="155.7 167.45 179.2 190.95" y="50.4" font-size="12.4" font-weight="500" fill="#f6f6f6">实际像素</text>
<rect x="227.5" y="36.5" width="75" height="18" rx="2.5" fill="url(#btn)" stroke="#2d2d2d"/>
<rect x="228.5" y="37.5" width="73" height="1" fill="#808080" opacity="0.55"/>
<rect x="228.0" y="55" width="74" height="1" fill="#5e5e5e" opacity="0.8"/>
<text x="240.7 252.45 264.2 275.95" y="50.4" font-size="12.4" font-weight="500" fill="#f6f6f6">适合屏幕</text>
<rect x="312.5" y="36.5" width="75" height="18" rx="2.5" fill="url(#btn)" stroke="#2d2d2d"/>
<rect x="313.5" y="37.5" width="73" height="1" fill="#808080" opacity="0.55"/>
<rect x="313.0" y="55" width="74" height="1" fill="#5e5e5e" opacity="0.8"/>
<text x="325.7 337.45 349.2 360.95" y="50.4" font-size="12.4" font-weight="500" fill="#f6f6f6">填充屏幕</text>
<rect x="397.5" y="36.5" width="75" height="18" rx="2.5" fill="url(#btn)" stroke="#2d2d2d"/>
<rect x="398.5" y="37.5" width="73" height="1" fill="#808080" opacity="0.55"/>
<rect x="398.0" y="55" width="74" height="1" fill="#5e5e5e" opacity="0.8"/>
<text x="410.7 422.45 434.2 445.95" y="50.4" font-size="12.4" font-weight="500" fill="#f6f6f6">打印尺寸</text>
<rect x="61.5" y="38" width="14" height="13.5" rx="2" fill="#6a6a6a" stroke="#303030"/>
<path d="M64.6,44.2 L68.2,48.4 L75,38.2" fill="none" stroke="#dedede" stroke-width="1.7"/></svg>
<div class="mt" style="left:5.2px">(S)</div><div class="mt" style="left:61.0px">(T)</div><div class="mt" style="left:90.6px;transform:none">3D(D)</div><div class="mt" style="left:165.2px">(V)</div><div class="mt" style="left:223.6px">(W)</div><div class="mt" style="left:284.6px">(H)</div>
</body></html>
